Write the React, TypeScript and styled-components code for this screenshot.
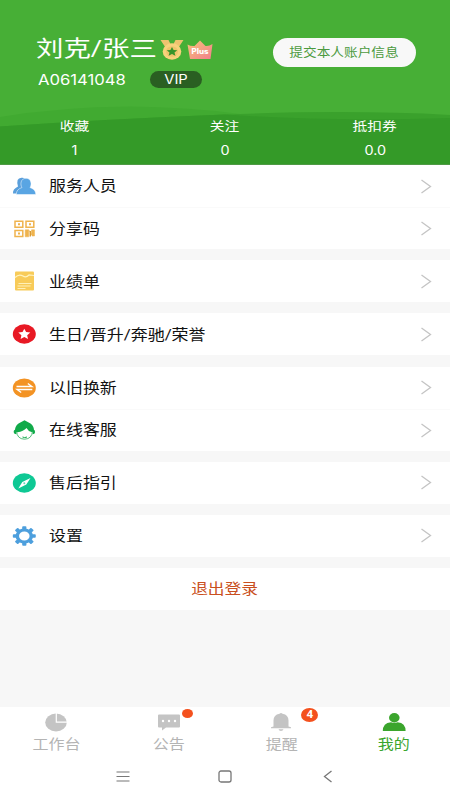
import React from "react";
import styled, { createGlobalStyle } from "styled-components";

const GlobalStyle = createGlobalStyle`
  * { box-sizing: border-box; }
  body { margin: 0; background: #fff; font-family: Roboto, "Noto Sans CJK SC", sans-serif; }
  svg { display: block; flex: none; }
`;

const Screen = styled.main`
  width: 450px;
  height: 800px;
  display: flex;
  flex-direction: column;
  background: #f7f7f7;
  overflow: hidden;
`;

const Label = styled.span<{ $size: number; $stretch?: number; $origin?: string; $color?: string; $family?: string; $weight?: number }>`
  display: inline-block;
  white-space: nowrap;
  font-size: ${(p) => p.$size}px;
  line-height: 1;
  font-weight: ${(p) => p.$weight ?? 400};
  color: ${(p) => p.$color ?? "inherit"};
  font-family: ${(p) => p.$family ?? "inherit"};
  transform: scaleX(${(p) => p.$stretch ?? 1.17});
  transform-origin: ${(p) => p.$origin ?? "center"};
`;

const LATIN = 'Inter, "Noto Sans CJK SC", sans-serif';

const Header = styled.header`
  position: relative;
  height: 165px;
  flex: none;
  background: #47af36;
  color: #fff;
  border-bottom: 1px solid #4f9a45;
`;

const Waves = styled.svg`
  position: absolute;
  left: 0;
  top: 0;
`;

const Profile = styled.div`
  position: relative;
  height: 118px;
  padding: 36px 34px 0 36px;
  display: flex;
  justify-content: space-between;
  align-items: flex-start;
`;

const NameLine = styled.div`
  display: flex;
  height: 26px;
  align-items: center;
`;

const NameBox = styled.div`
  width: 124px;
  display: flex;
`;

const CrownBox = styled.div`
  padding: 2px 0 0 3px;
`;

const IdLine = styled.div`
  display: flex;
  align-items: center;
  height: 17px;
  margin-top: 9px;
`;

const IdBox = styled.div`
  width: 114px;
  padding-left: 2px;
`;

const Vip = styled.div`
  width: 52px;
  height: 17px;
  padding-top: 1px;
  border-radius: 9px;
  background: #2a5f22;
  display: flex;
  align-items: center;
  justify-content: center;
`;

const SubmitButton = styled.button`
  width: 143px;
  height: 29px;
  margin-top: 2px;
  padding: 1px 0 0;
  border: 0;
  border-radius: 15px;
  background: #f8f8f8;
  display: flex;
  align-items: center;
  justify-content: center;
  font-family: inherit;
`;

const Stats = styled.div`
  position: relative;
  display: grid;
  grid-template-columns: repeat(3, 1fr);
`;

const Stat = styled.div`
  display: flex;
  flex-direction: column;
  align-items: center;
  padding-top: 3px;
  gap: 11px;
`;

const Group = styled.section`
  background: #fff;
  margin-bottom: 11.2px;
  flex: none;
`;

const Row = styled.div<{ $height: number }>`
  height: ${(p) => p.$height}px;
  display: flex;
  align-items: center;
  padding: 0 18px 0 12px;
  & + & { border-top: 1px solid #fafafa; }
`;

const IconBox = styled.div`
  width: 37px;
  display: flex;
`;

const RowText = styled.div`
  flex: 1;
  display: flex;
  padding-top: 1px;
  color: #111;
`;

const Logout = styled.button`
  height: 42px;
  flex: none;
  border: 0;
  background: #fff;
  display: flex;
  align-items: center;
  justify-content: center;
  padding: 1px 0 0;
  font-family: inherit;
`;

const Spacer = styled.div`
  flex: 1;
`;

const TabBar = styled.nav`
  height: 50px;
  flex: none;
  background: #fff;
  display: grid;
  grid-template-columns: repeat(4, 1fr);
`;

const Tab = styled.div<{ $active?: boolean }>`
  position: relative;
  display: flex;
  flex-direction: column;
  align-items: center;
  padding-top: 5px;
  gap: 6px;
  color: ${(p) => (p.$active ? "#3ba52d" : "#b4b4b4")};
`;

const Badge = styled.div<{ $w: number; $h: number; $x: number; $y: number }>`
  position: absolute;
  left: ${(p) => p.$x}px;
  top: ${(p) => p.$y}px;
  width: ${(p) => p.$w}px;
  height: ${(p) => p.$h}px;
  border-radius: 50%;
  background: #f4511e;
  color: #fff;
  display: flex;
  align-items: center;
  justify-content: center;
`;

const SystemBar = styled.footer`
  height: 43px;
  flex: none;
  background: #fff;
  display: grid;
  grid-template-columns: 102px 102px 104px;
  justify-content: center;
  justify-items: center;
  padding: 13px 0 0 2px;
`;

const Medal = () => (
  <svg width="24" height="21" viewBox="0 0 24 21">
    <path d="M0.500 1h8l3 6-5 3zM23.500 1h-8l-3 6 5 3z" fill="#eec36f" />
    <ellipse cx="12" cy="12.500" rx="9.300" ry="8.200" fill="#f7d27c" />
    <ellipse cx="12" cy="12.500" rx="6" ry="5.200" fill="#efc56c" />
    <path d="M12 8l1.600 3 3.700.3-2.800 2.300.9 3.200-3.400-1.700-3.400 1.700.9-3.200-2.800-2.300 3.700-.3z" fill="#38942a" />
  </svg>
);

const Crown = () => (
  <svg width="26" height="20" viewBox="0 0 26 20">
    <defs>
      <linearGradient id="crown" x1="0" y1="0" x2="1" y2="1">
        <stop offset="0" stopColor="#f7c477" />
        <stop offset="1" stopColor="#f27e8d" />
      </linearGradient>
    </defs>
    <path d="M0.500 4.500Q4 6.500 7.500 6L13 .5 18.500 6q3.500.5 7-2L23.500 19H3z" fill="url(#crown)" />
    <text x="13" y="14" textAnchor="middle" textLength="17" lengthAdjust="spacingAndGlyphs" fontFamily="Inter, sans-serif" fontSize="7" fontWeight="800" fill="#fff">Plus</text>
  </svg>
);

const People = () => (
  <svg width="24" height="18" viewBox="0 0 24 18">
    <path d="M1 16.500Q.5 12 6 9.500 3.500 1 9.500.7q4.500-.5 4.500 4.500L9 16.500z" fill="#5a9fdb" />
    <path d="M4.300 17.500c0-4 2-5.500 5.700-7C8 8 8.500 1.200 14 1.200s6 6.800 4 9.300c3.500 1.500 5.800 3 5.800 7z" fill="#59a5e3" stroke="#fff" strokeWidth=".5" />
  </svg>
);

const QrCode = () => (
  <svg width="24" height="18" viewBox="0 0 24 18" fill="none" stroke="#efb34d" strokeWidth="1.500">
    <path d="M3 1.200h7.800v6H3zM14 1.200h7.800v6H14zM3 10.500h7.800v6H3z" />
    <path d="M6 4.200h2M17 4.200h2M6 13.500h2" strokeWidth="2" />
    <path d="M13.200 9.800h3.500v7h-3.500zM16.700 9.800l2.800 4.500V9.800h3V16h-2.500" fill="#efb34d" strokeWidth=".5" />
    <path d="M18.300 11v5.500" stroke="#d89b35" />
  </svg>
);

const Report = () => (
  <svg width="24" height="20" viewBox="0 0 24 20">
    <rect x="3" y=".5" width="19" height="19" rx="1" fill="#f8cb59" />
    <path d="M3 6.500q4-4 8-1.500 3 2 6-1l5 .5" stroke="#fff3bf" strokeWidth="1.200" fill="none" />
    <path d="M6.500 12.500h13M5.500 15h13M5.500 17.500h8" stroke="#fff0b8" />
  </svg>
);

const StarDisc = () => (
  <svg width="24" height="20" viewBox="0 0 24 20">
    <ellipse cx="12.300" cy="10" rx="11.500" ry="9.700" fill="#e81924" />
    <path d="M12.300 4.800l1.800 3.300 4.200.5-3.100 2.600.8 3.700-3.700-1.800-3.700 1.800.8-3.700-3.100-2.600 4.200-.5z" fill="#fff" />
  </svg>
);

const Exchange = () => (
  <svg width="24" height="20" viewBox="0 0 24 20">
    <ellipse cx="12.300" cy="10" rx="11.500" ry="9.500" fill="#f39324" />
    <path d="M4.500 8.500h15.500l-4.200-3M20.300 11.500H5l4.200 3" stroke="#fff" strokeWidth="1.300" fill="none" />
  </svg>
);

const Service = () => (
  <svg width="24" height="20" viewBox="0 0 24 20">
    <path d="M4.500 11q.5 8 8 8.200Q20 19 20.500 11" fill="#fff" stroke="#2baf5b" strokeWidth=".8" />
    <path d="M3.200 11.500C2.500 8 4 5.500 6.500 3.500L12.500.3 18.500 3.500C21 5.500 22.500 8 21.800 11.500L19.500 12Q16 11 14.500 8q-3 3.500-9 4.200z" fill="#11aa4a" />
    <path d="M4 9.500q-2.500.2-2.300 2.700.2 1.800 2.700 2M21 9.500q2.300.2 2.100 2.700-.2 1.800-2.500 2" fill="#11aa4a" />
    <path d="M10.500 17q2 1.200 4.500 0" stroke="#11aa4a" fill="none" />
  </svg>
);

const Compass = () => (
  <svg width="24" height="20" viewBox="0 0 24 20">
    <ellipse cx="12.300" cy="10" rx="11.500" ry="9.700" fill="#0ec894" />
    <path d="M18.500 5l-4.200 6.500-8 4 4-6.500z" fill="#fff" />
    <circle cx="12.300" cy="10.200" r="1" fill="#5edab7" />
  </svg>
);

const Gear = () => (
  <svg width="24" height="20" viewBox="0 0 24 20">
    <g transform="translate(12.300 10) scale(1.170 1)">
      {[0, 45, 90, 135, 180, 225, 270, 315].map((a) => (
        <rect key={a} x="-1.800" y="-9.800" width="3.600" height="4.500" rx=".8" fill="#4d9fdd" transform={`rotate(${a})`} />
      ))}
      <circle r="6" fill="none" stroke="#4d9fdd" strokeWidth="3" />
    </g>
  </svg>
);

const Chevron = () => (
  <svg width="12" height="15" viewBox="0 0 12 15" fill="none" stroke="#c4c4c4" strokeWidth="1.300">
    <path d="M1.500 1l9 6.500-9 6.500" />
  </svg>
);

const Pie = () => (
  <svg width="24" height="20" viewBox="0 0 24 20">
    <ellipse cx="12" cy="10.500" rx="10.800" ry="9" fill="#c4c4c4" />
    <path d="M12.300 1v9.200H23" fill="none" stroke="#fff" strokeWidth="1.200" />
  </svg>
);

const Chat = () => (
  <svg width="24" height="20" viewBox="0 0 24 20">
    <path d="M2 2.500h20q1 0 1 1v11q0 1-1 1H9l-4 3v-3H2q-1 0-1-1v-11q0-1 1-1z" fill="#c4c4c4" />
    <g fill="#fff"><circle cx="6" cy="9" r="1.200" /><circle cx="12" cy="9" r="1.200" /><circle cx="18" cy="9" r="1.200" /></g>
  </svg>
);

const Bell = () => (
  <svg width="24" height="20" viewBox="0 0 24 20" fill="#c4c4c4">
    <path d="M4.500 14.500V8.500Q4.500 3 10.500 1.800q1.500-1.500 3 0 6 1.200 6 6.700v6l2.500.8v.9H2v-.9zM9.500 17.300h5q-.5 1.700-2.500 1.700t-2.500-1.700z" />
  </svg>
);

const Me = () => (
  <svg width="24" height="20" viewBox="0 0 24 20" fill="#3ba52d">
    <ellipse cx="12.300" cy="5.800" rx="5.300" ry="4.700" />
    <path d="M.8 19Q.8 11 9 10.200q3.300 1.200 6.600 0 8 .8 8 8.800z" />
  </svg>
);

const groups = [
  [{ label: "服务人员", icon: <People />, h: 42 }, { label: "分享码", icon: <QrCode />, h: 42 }],
  [{ label: "业绩单", icon: <Report />, h: 42 }],
  [{ label: "生日/晋升/奔驰/荣誉", icon: <StarDisc />, h: 42 }],
  [{ label: "以旧换新", icon: <Exchange />, h: 42 }, { label: "在线客服", icon: <Service />, h: 42 }],
  [{ label: "售后指引", icon: <Compass />, h: 42 }],
  [{ label: "设置", icon: <Gear />, h: 42 }],
];

const stats = [["收藏", "1"], ["关注", "0"], ["抵扣券", "0.0"]];

export default function App() {
  return (
    <Screen>
      <GlobalStyle />
      <Header>
        <Waves width="450" height="164" viewBox="0 0 450 164">
          <path d="M0 117Q60 107 130 106.500 190 107 240 114V164H0z" fill="#41aa31" />
          <path d="M0 126.500Q110 119 225 114.500 350 109.500 450 115V164H0z" fill="#3aa12c" />
          <path d="M0 126.500Q110 119 225 114.500 330 122 450 118V164H0z" fill="#349a28" />
        </Waves>
        <Profile>
          <div>
            <NameLine>
              <NameBox><Label $size={22} $stretch={1.245} $origin="left">刘克/张三</Label></NameBox>
              <Medal />
              <CrownBox><Crown /></CrownBox>
            </NameLine>
            <IdLine>
              <IdBox><Label $size={14} $stretch={1.19} $origin="left" $family={LATIN}>A06141048</Label></IdBox>
              <Vip><Label $size={12.5} $stretch={1.18} $family={LATIN}>VIP</Label></Vip>
            </IdLine>
          </div>
          <SubmitButton><Label $size={12} $stretch={1.14} $color="#4b9a3e">提交本人账户信息</Label></SubmitButton>
        </Profile>
        <Stats>
          {stats.map(([name, value]) => (
            <Stat key={name}>
              <Label $size={12.5} $stretch={1.18}>{name}</Label>
              <Label $size={12.5} $stretch={1.15} $family={LATIN}>{value}</Label>
            </Stat>
          ))}
        </Stats>
      </Header>
      {groups.map((rows) => (
        <Group key={rows[0].label}>
          {rows.map((r) => (
            <Row key={r.label} $height={r.h}>
              <IconBox>{r.icon}</IconBox>
              <RowText><Label $size={14.3} $stretch={1.185} $origin="left">{r.label}</Label></RowText>
              <Chevron />
            </Row>
          ))}
        </Group>
      ))}
      <Logout><Label $size={14.3} $color="#c94f20">退出登录</Label></Logout>
      <Spacer />
      <TabBar>
        <Tab><Pie /><Label $size={13.7}>工作台</Label></Tab>
        <Tab><Chat /><Label $size={13.7}>公告</Label><Badge $w={11} $h={9} $x={69} $y={2} /></Tab>
        <Tab><Bell /><Label $size={13.7}>提醒</Label><Badge $w={17} $h={14} $x={76} $y={1}><Label $size={10} $weight={700}>4</Label></Badge></Tab>
        <Tab $active><Me /><Label $size={13.7}>我的</Label></Tab>
      </TabBar>
      <SystemBar>
        <svg width="14" height="13" viewBox="0 0 14 13" stroke="#777" strokeWidth="1.200"><path d="M.5 2h13M.5 6.500h13M.5 11h13" /></svg>
        <svg width="14" height="13" viewBox="0 0 14 13" fill="none" stroke="#777" strokeWidth="1.300"><rect x="1" y="1" width="12" height="11" rx="2" /></svg>
        <svg width="10" height="13" viewBox="0 0 10 13" fill="none" stroke="#777" strokeWidth="1.300"><path d="M8.500 1L1.500 6.500l7 5.500" /></svg>
      </SystemBar>
    </Screen>
  );
}
